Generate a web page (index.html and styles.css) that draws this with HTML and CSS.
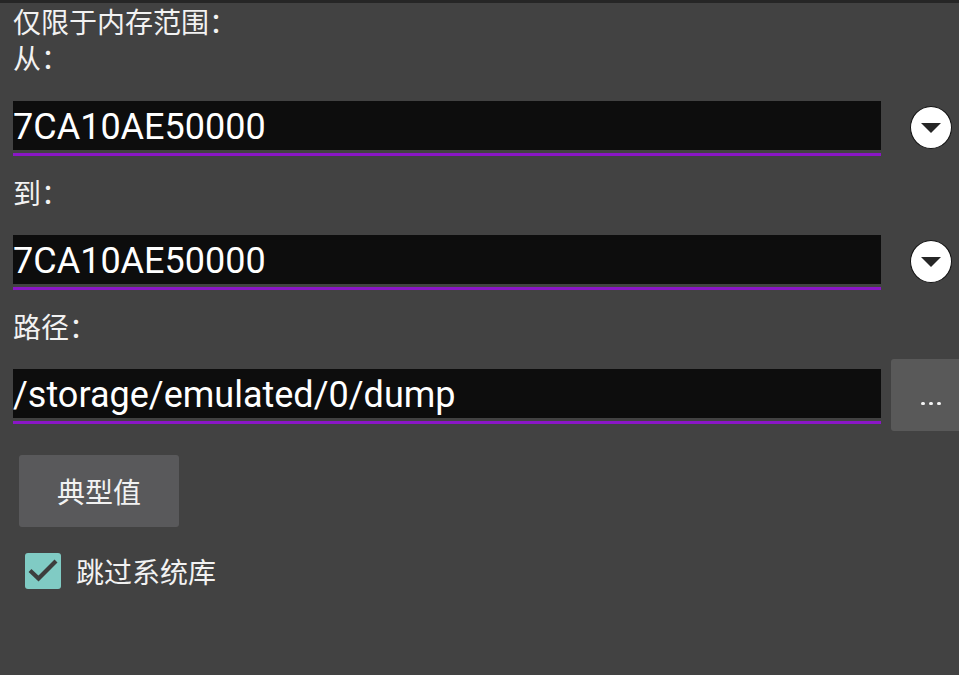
FILE: index.html
```html
<!DOCTYPE html>
<html lang="zh">
<head>
<meta charset="utf-8">
<title>内存范围</title>
<link rel="stylesheet" href="styles.css">
</head>
<body>
<div class="topbar"></div>
<main class="content">
  <div class="title">仅限于内存范围：</div>
  <div class="label first">从：</div>
  <div class="row">
    <div class="field"><div class="field-box">7CA10AE50000</div><div class="field-line"></div></div>
    <div class="slot">
      <div class="circle">
        <svg width="20" height="10" viewBox="0 0 20 10"><polygon points="0,0 20,0 10,10" fill="#262626"/></svg>
      </div>
    </div>
  </div>
  <div class="label">到：</div>
  <div class="row">
    <div class="field"><div class="field-box">7CA10AE50000</div><div class="field-line"></div></div>
    <div class="slot">
      <div class="circle">
        <svg width="20" height="10" viewBox="0 0 20 10"><polygon points="0,0 20,0 10,10" fill="#262626"/></svg>
      </div>
    </div>
  </div>
  <div class="label">路径：</div>
  <div class="row">
    <div class="field"><div class="field-box">/storage/emulated/0/dump</div><div class="field-line"></div></div>
    <div class="slot"><div class="more"><span class="dot"></span><span class="dot"></span><span class="dot"></span></div></div>
  </div>
  <div class="typical">典型值</div>
  <div class="check-row">
    <div class="checkbox">
      <svg width="36" height="36" viewBox="0 0 36 36"><polyline points="5,17.5 13.5,25.5 31,8" fill="none" stroke="#3d3d3d" stroke-width="4.2"/></svg>
    </div>
    <span class="check-label">跳过系统库</span>
  </div>
</main>
</body>
</html>
```

FILE: styles.css
```css
html, body {
  margin: 0;
  padding: 0;
  background: #424242;
  overflow: hidden;
}
body {
  width: 959px;
  height: 675px;
  font-family: "Noto Sans CJK SC", "Noto Sans", sans-serif;
  color: #f2f2f2;
}
.topbar {
  height: 3px;
  background: #262626;
}
.content {
  padding-left: 13px;
}
.title, .label {
  font-size: 28px;
  line-height: 36px;
  height: 36px;
  white-space: nowrap;
}
.label {
  padding-top: 11px;
  padding-bottom: 15px;
}
.label.first {
  padding-top: 0;
  padding-bottom: 16px;
}
.row {
  display: flex;
  height: 72px;
}
.field {
  width: 868px;
  flex: none;
  margin-top: 10px;
}
.field-box {
  height: 49px;
  background: #0d0d0d;
  font-family: Roboto, "Liberation Sans", sans-serif;
  font-size: 36px;
  line-height: 49px;
  padding-top: 2px;
  box-sizing: border-box;
  color: #ffffff;
  white-space: nowrap;
  overflow: hidden;
}
.field-line {
  margin-top: 3px;
  height: 3px;
  background: #8a16c6;
}
.slot {
  width: 80px;
  flex: none;
  margin-left: 10px;
  display: flex;
  align-items: center;
  justify-content: center;
}
.circle {
  width: 40px;
  height: 40px;
  border-radius: 50%;
  background: #ffffff;
  border: 1.5px solid #111;
  display: flex;
  align-items: center;
  justify-content: center;
  padding-top: 1px;
  box-sizing: content-box;
}
.more {
  width: 80px;
  height: 72px;
  background: #595959;
  border-radius: 3px;
  display: flex;
  align-items: center;
  justify-content: center;
  gap: 4.5px;
  padding-top: 17px;
  box-sizing: border-box;
}
.dot {
  width: 3.5px;
  height: 3.5px;
  border-radius: 50%;
  background: #f4f4f4;
}
.typical {
  margin-top: 24px;
  margin-left: 6px;
  width: 160px;
  height: 72px;
  background: #59595b;
  border-radius: 3px;
  font-size: 28px;
  display: flex;
  align-items: center;
  justify-content: center;
}
.check-row {
  margin-top: 26px;
  margin-left: 12px;
  display: flex;
  align-items: center;
  gap: 15px;
}
.checkbox {
  width: 36px;
  height: 36px;
  background: #80cbc4;
  border-radius: 3px;
  flex: none;
}
.checkbox svg {
  display: block;
}
.check-label {
  font-size: 28px;
  line-height: 36px;
}
```
